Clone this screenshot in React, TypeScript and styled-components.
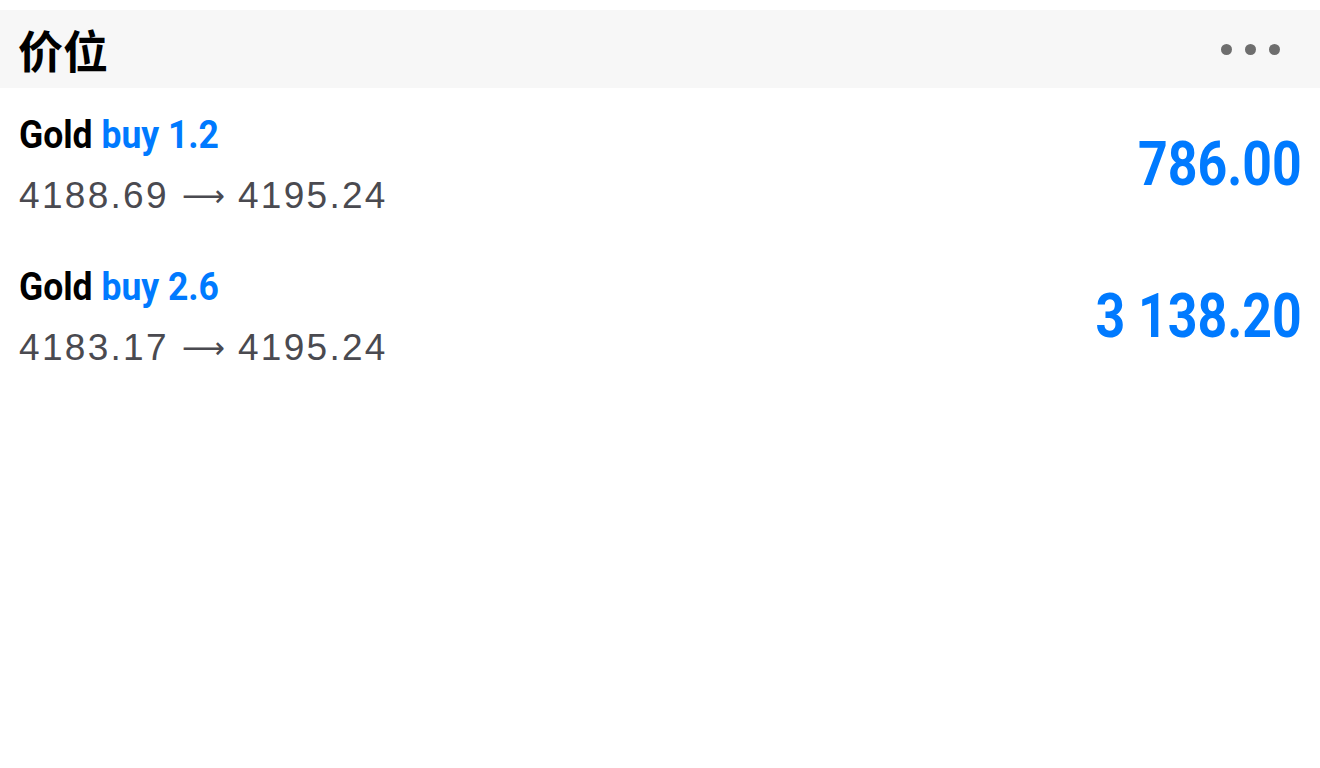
import React from "react";
import styled, { createGlobalStyle } from "styled-components";

const Global = createGlobalStyle`
  html, body { margin: 0; padding: 0; background: #ffffff; }
  body { font-family: "Liberation Sans", Arial, sans-serif; }
`;

const Page = styled.div`
  padding-top: 10px;
`;

const Header = styled.div`
  height: 78px;
  background: #f7f7f7;
  display: flex;
  align-items: center;
  justify-content: space-between;
  padding: 0 40px 0 18px;
`;

const Title = styled.div`
  font-family: "Noto Sans CJK SC", "Noto Sans", sans-serif;
  font-weight: 700;
  font-size: 45px;
  line-height: 1;
  color: #000;
`;

const Dots = styled.div`
  display: flex;
  gap: 13px;
`;

const Dot = styled.span`
  width: 11px;
  height: 11px;
  border-radius: 50%;
  background: #6e6e6e;
`;

const Row = styled.div`
  display: flex;
  align-items: center;
  justify-content: space-between;
  padding: 23.5px 18px 22.5px 19px;
`;

const Info = styled.div`
  display: flex;
  flex-direction: column;
  align-items: flex-start;
  gap: 16px;
`;

const Symbol = styled.div`
  font-family: Roboto, "Liberation Sans", sans-serif;
  font-weight: 700;
  font-size: 39px;
  line-height: 46px;
  color: #000;
  white-space: nowrap;
  transform: scaleX(0.91);
  transform-origin: left center;
`;

const Blue = styled.span`
  color: #007aff;
`;

const Prices = styled.div`
  font-family: "Liberation Sans", Arial, sans-serif;
  font-size: 37px;
  letter-spacing: 2.3px;
  line-height: 44px;
  color: #4a4a50;
  display: flex;
  align-items: center;
`;

const Arrow = styled.span`
  font-family: "DejaVu Sans", sans-serif;
  font-size: 30px;
  letter-spacing: 0;
  margin: 0 13px 0 13px;
`;

const Profit = styled.div`
  font-family: Roboto, "Liberation Sans", sans-serif;
  font-weight: 700;
  font-size: 61px;
  line-height: 1;
  color: #007aff;
  white-space: nowrap;
  transform: scaleX(0.85);
  transform-origin: right center;
`;

const trades = [
  { lots: "1.2", open: "4188.69", close: "4195.24", profit: "786.00" },
  { lots: "2.6", open: "4183.17", close: "4195.24", profit: "3 138.20" },
];

export default function App() {
  return (
    <>
      <Global />
      <Page>
        <Header>
          <Title>价位</Title>
          <Dots>
            <Dot />
            <Dot />
            <Dot />
          </Dots>
        </Header>
        {trades.map((t, i) => (
          <Row key={i}>
            <Info>
              <Symbol>
                Gold <Blue>buy {t.lots}</Blue>
              </Symbol>
              <Prices>
                <span>{t.open}</span>
                <Arrow>⟶</Arrow>
                <span>{t.close}</span>
              </Prices>
            </Info>
            <Profit>{t.profit}</Profit>
          </Row>
        ))}
      </Page>
    </>
  );
}
